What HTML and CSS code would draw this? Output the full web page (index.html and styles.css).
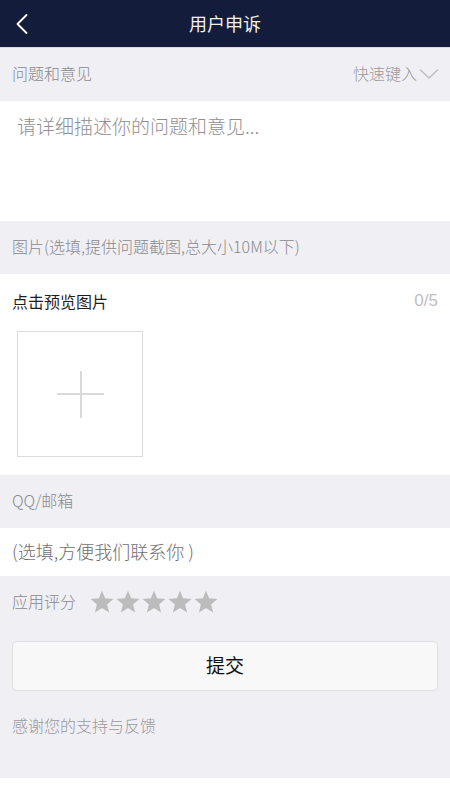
FILE: index.html
```html
<!DOCTYPE html>
<html lang="zh">
<head>
<meta charset="utf-8">
<link rel="stylesheet" href="styles.css">
</head>
<body>
<div class="page">
  <header class="nav">
    <svg class="back" width="14" height="22" viewBox="0 0 14 22"><path d="M11.5 2 L2.5 11 L11.5 20" fill="none" stroke="#fff" stroke-width="1.8" stroke-linecap="round" stroke-linejoin="round"/></svg>
    <div class="title">用户申诉</div>
  </header>
  <div class="section-head">
    <span>问题和意见</span>
    <span class="quick">快速键入<svg width="20" height="12" viewBox="0 0 20 12"><path d="M1 1.5 L10 10 L19 1.5" fill="none" stroke="#bdbdc2" stroke-width="1.3"/></svg></span>
  </div>
  <div class="textarea">请详细描述你的问题和意见...</div>
  <div class="section-head">
    <span>图片(选填,提供问题截图,总大小10M以下)</span>
  </div>
  <div class="pics">
    <div class="pics-row">
      <span class="pics-title">点击预览图片</span>
      <span class="count">0/5</span>
    </div>
    <div class="addbox"><span class="plus-h"></span><span class="plus-v"></span></div>
  </div>
  <div class="section-head">
    <span>QQ/邮箱</span>
  </div>
  <div class="contact">(选填,方便我们联系你 )</div>
  <div class="rating">
    <span>应用评分</span>
    <div class="stars">
      <svg width="26" height="26" viewBox="0 0 24 24"><path d="M12 1.5 L14.9 8.6 L22.6 9.2 L16.7 14.2 L18.6 21.7 L12 17.6 L5.4 21.7 L7.3 14.2 L1.4 9.2 L9.1 8.6 Z" fill="#bcbcbc"/></svg>
      <svg width="26" height="26" viewBox="0 0 24 24"><path d="M12 1.5 L14.9 8.6 L22.6 9.2 L16.7 14.2 L18.6 21.7 L12 17.6 L5.4 21.7 L7.3 14.2 L1.4 9.2 L9.1 8.6 Z" fill="#bcbcbc"/></svg>
      <svg width="26" height="26" viewBox="0 0 24 24"><path d="M12 1.5 L14.9 8.6 L22.6 9.2 L16.7 14.2 L18.6 21.7 L12 17.6 L5.4 21.7 L7.3 14.2 L1.4 9.2 L9.1 8.6 Z" fill="#bcbcbc"/></svg>
      <svg width="26" height="26" viewBox="0 0 24 24"><path d="M12 1.5 L14.9 8.6 L22.6 9.2 L16.7 14.2 L18.6 21.7 L12 17.6 L5.4 21.7 L7.3 14.2 L1.4 9.2 L9.1 8.6 Z" fill="#bcbcbc"/></svg>
      <svg width="26" height="26" viewBox="0 0 24 24"><path d="M12 1.5 L14.9 8.6 L22.6 9.2 L16.7 14.2 L18.6 21.7 L12 17.6 L5.4 21.7 L7.3 14.2 L1.4 9.2 L9.1 8.6 Z" fill="#bcbcbc"/></svg>
    </div>
  </div>
  <div class="footer-area">
    <button class="submit">提交</button>
    <div class="thanks">感谢您的支持与反馈</div>
  </div>
</div>
</body>
</html>
```

FILE: styles.css
```css
* { box-sizing: border-box; margin: 0; padding: 0; }
html, body { background: #ffffff; }
body {
  font-family: "Noto Sans CJK SC", "Noto Sans", sans-serif;
  font-weight: 300;
  width: 450px;
}
.page { width: 450px; }
.nav {
  height: 48px;
  background: #141c3c;
  display: flex;
  align-items: center;
  justify-content: center;
  position: relative;
  border-bottom: 1px solid #d8d8e0;
  padding-bottom: 2px;
}
.back { position: absolute; left: 15px; top: 13px; }
.title { color: #f3efe2; font-size: 18px; font-weight: 400; }
.section-head {
  height: 53px;
  background: #efeff4;
  display: flex;
  align-items: center;
  justify-content: space-between;
  padding: 0 12px 3px;
  font-size: 16px;
  color: #8a8a8e;
}
.quick { display: flex; align-items: center; gap: 2px; color: #9a9a9e; margin-right: -1px; }
.quick svg { margin-top: 2px; }
.textarea {
  height: 120px;
  background: #fff;
  padding: 11px 17px;
  font-size: 19px;
  color: #8f8f93;
  line-height: 28px;
}
.pics { background: #fff; height: 201px; padding: 0 12px; }
.pics-row {
  height: 54px;
  display: flex;
  align-items: center;
  justify-content: space-between;
  padding-bottom: 1px;
}
.pics-title { font-size: 16px; color: #1e1e1e; font-weight: 400; }
.count { font-size: 17px; color: #c0c0c4; font-family: "Liberation Sans", "Noto Sans", sans-serif; }
.addbox {
  margin-left: 5px;
  margin-top: 3px;
  width: 126px;
  height: 126px;
  border: 1px solid #dcdcdc;
  position: relative;
}
.plus-h, .plus-v { position: absolute; background: #d9d9d9; }
.plus-h { left: 39px; top: 61px; width: 47px; height: 1.5px; }
.plus-v { left: 62px; top: 39px; width: 1.5px; height: 47px; }
.contact {
  height: 48px;
  background: #fff;
  display: flex;
  align-items: center;
  padding: 0 12px 2px;
  font-size: 18px;
  color: #6e6e72;
}
.rating {
  height: 53px;
  background: #efeff4;
  display: flex;
  align-items: center;
  padding: 0 12px 3px;
  font-size: 16px;
  color: #8a8a8e;
  gap: 13px;
}
.stars { display: flex; gap: 0; margin-top: 1px; }
.footer-area {
  background: #efeff4;
  height: 149px;
  padding: 12px 12px 0;
}
.submit {
  width: 426px;
  height: 50px;
  background: #f8f8f8;
  border: 1px solid #e0e0e3;
  border-radius: 5px;
  font-family: "Noto Sans CJK SC", sans-serif;
  font-size: 19px;
  font-weight: 400;
  color: #111;
  display: block;
  padding-bottom: 3px;
}
.thanks {
  margin-top: 22px;
  font-size: 16px;
  color: #9a9a9e;
}
```
